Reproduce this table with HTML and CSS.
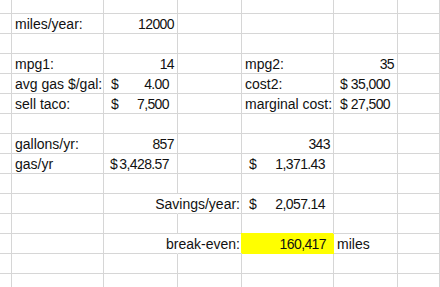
FILE: index.html
```html
<!DOCTYPE html>
<html>
<head>
<meta charset="utf-8">
<link rel="stylesheet" href="styles.css">
</head>
<body>
<div class="sheet">
  <!-- row 0 -->
  <div class="c"></div><div class="c"></div><div class="c"></div><div class="c"></div><div class="c"></div><div class="c"></div><div class="c"></div>
  <!-- row 1 -->
  <div class="c"></div><div class="c l">miles/year:</div><div class="c n">12000</div><div class="c"></div><div class="c"></div><div class="c"></div><div class="c"></div>
  <!-- row 2 -->
  <div class="c"></div><div class="c"></div><div class="c"></div><div class="c"></div><div class="c"></div><div class="c"></div><div class="c"></div>
  <!-- row 3 -->
  <div class="c"></div><div class="c l">mpg1:</div><div class="c n">14</div><div class="c"></div><div class="c l">mpg2:</div><div class="c n">35</div><div class="c"></div>
  <!-- row 4 -->
  <div class="c"></div><div class="c l">avg gas $/gal:</div><div class="c acc"><span>$</span><span>4.00</span></div><div class="c"></div><div class="c l">cost2:</div><div class="c acc narrow"><span>$</span><span>35,000</span></div><div class="c"></div>
  <!-- row 5 -->
  <div class="c"></div><div class="c l">sell taco:</div><div class="c acc"><span>$</span><span>7,500</span></div><div class="c"></div><div class="c l">marginal cost:</div><div class="c acc narrow"><span>$</span><span>27,500</span></div><div class="c"></div>
  <!-- row 6 -->
  <div class="c"></div><div class="c"></div><div class="c"></div><div class="c"></div><div class="c"></div><div class="c"></div><div class="c"></div>
  <!-- row 7 -->
  <div class="c"></div><div class="c l">gallons/yr:</div><div class="c n">857</div><div class="c"></div><div class="c n">343</div><div class="c"></div><div class="c"></div>
  <!-- row 8 -->
  <div class="c"></div><div class="c l">gas/yr</div><div class="c acc tight"><span>$</span><span>3,428.57</span></div><div class="c"></div><div class="c acc"><span>$</span><span>1,371.43</span></div><div class="c"></div><div class="c"></div>
  <!-- row 9 -->
  <div class="c"></div><div class="c"></div><div class="c"></div><div class="c"></div><div class="c"></div><div class="c"></div><div class="c"></div>
  <!-- row 10 -->
  <div class="c"></div><div class="c"></div><div class="c open"></div><div class="c r">Savings/year:</div><div class="c acc"><span>$</span><span>2,057.14</span></div><div class="c"></div><div class="c"></div>
  <!-- row 11 -->
  <div class="c"></div><div class="c"></div><div class="c"></div><div class="c"></div><div class="c"></div><div class="c"></div><div class="c"></div>
  <!-- row 12 -->
  <div class="c"></div><div class="c"></div><div class="c open"></div><div class="c r">break-even:</div><div class="c n hl">160,417</div><div class="c l">miles</div><div class="c"></div>
  <!-- row 13 -->
  <div class="c"></div><div class="c"></div><div class="c"></div><div class="c"></div><div class="c"></div><div class="c"></div><div class="c"></div>
  <!-- row 14 -->
  <div class="c"></div><div class="c"></div><div class="c"></div><div class="c"></div><div class="c"></div><div class="c"></div><div class="c"></div>
</div>
</body>
</html>
```
FILE: styles.css
```css
html, body {
  margin: 0;
  padding: 0;
  background: #fff;
  overflow: hidden;
}
body {
  width: 440px;
  height: 287px;
}
.sheet {
  display: grid;
  grid-template-columns: 12px 92px 74px 64px 92px 64px 1fr;
  grid-auto-rows: 20px;
  margin-top: -6px;
  font-family: "Liberation Sans", Arial, sans-serif;
  font-size: 14px;
  color: #111;
}
.c {
  box-sizing: border-box;
  border-right: 1px solid #d6d6d6;
  border-bottom: 1px solid #d6d6d6;
  display: flex;
  align-items: flex-end;
  white-space: nowrap;
  line-height: 16px;
  padding-bottom: 1px;
  min-width: 0;
}
.l {
  padding-left: 3px;
}
.n {
  justify-content: flex-end;
  padding-right: 3px;
  letter-spacing: -0.6px;
}
.acc {
  justify-content: space-between;
  padding-left: 7px;
  padding-right: 8px;
  gap: 3px;
}
.acc span:last-child {
  letter-spacing: -0.6px;
}
.tight {
  padding-left: 6px;
  gap: 1px;
}
.narrow {
  padding-left: 6px;
  padding-right: 7px;
  gap: 3px;
}
.r {
  justify-content: flex-end;
  padding-right: 1px;
}
.open {
  border-right-color: transparent;
}
.hl {
  background: #ffff00;
  border-right-color: #ffff00;
  border-bottom-color: #ffff00;
  box-shadow: -1px -1px 0 #ffff00;
  padding-right: 7px;
}
```
